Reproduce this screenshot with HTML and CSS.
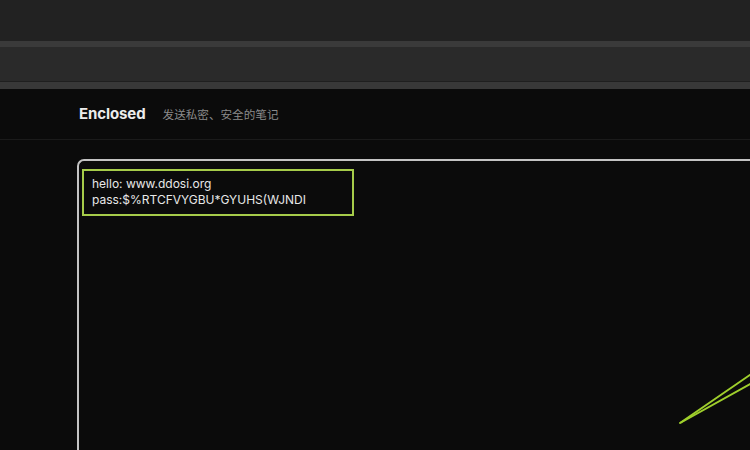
FILE: index.html
```html
<!DOCTYPE html>
<html lang="zh">
<head>
<meta charset="utf-8">
<title>Enclosed</title>
<link rel="stylesheet" href="styles.css">
</head>
<body>
<div class="chrome">
  <div class="band-top"></div>
  <div class="strip"></div>
  <div class="band-mid"></div>
  <div class="strip strip-low"></div>
</div>
<header class="header">
  <span class="brand">Enclosed</span>
  <span class="tagline">发送私密、安全的笔记</span>
</header>
<main class="main">
  <div class="editor">
    <div class="note">
      <div>hello: www.ddosi.org</div>
      <div>pass:$%RTCFVYGBU*GYUHS(WJNDI</div>
    </div>
  </div>
  <svg class="strokes" width="80" height="60" viewBox="0 0 80 60">
    <line x1="10" y1="53" x2="82" y2="3.5" stroke="#9fcf2c" stroke-width="2" stroke-linecap="round"/>
    <line x1="11" y1="52.5" x2="82" y2="13" stroke="#9fcf2c" stroke-width="2" stroke-linecap="round"/>
  </svg>
</main>
</body>
</html>
```
FILE: styles.css
```css
html, body {
  margin: 0;
  padding: 0;
  height: 100%;
  overflow: hidden;
  background: #0b0b0b;
  font-family: Inter, "Liberation Sans", "Noto Sans CJK SC", sans-serif;
}
.chrome {
  display: flex;
  flex-direction: column;
}
.band-top { height: 41px; background: #222222; }
.strip { height: 6px; background: #3a3a3a; }
.band-mid { height: 34px; background: #2a2a2a; border-bottom: 1px solid #1f1f1f; }
.strip-low { height: 7px; background: #383838; }
.header {
  height: 50px;
  border-bottom: 1px solid #1b1b1b;
  display: flex;
  align-items: center;
  padding-left: 79px;
  gap: 17px;
}
.brand {
  color: #ececec;
  font-weight: 700;
  font-size: 15px;
  letter-spacing: -0.1px;
  position: relative;
  top: -1px;
}
.tagline {
  color: #8a8a8a;
  font-size: 11.6px;
  font-family: "Noto Sans CJK SC", sans-serif;
}
.main {
  position: relative;
  box-sizing: border-box;
  padding: 19px 0 0 77px;
  height: 310px;
}
.editor {
  box-sizing: border-box;
  border: 2px solid #c4c4c4;
  border-right: none;
  border-bottom: none;
  border-radius: 7px 0 0 0;
  height: 100%;
  padding: 8px 0 0 3px;
}
.note {
  box-sizing: border-box;
  width: 272px;
  height: 47px;
  border: 2px solid #a6cc4a;
  padding: 5px 0 0 8px;
  color: #e8e8e8;
  font-size: 12px;
  line-height: 16px;
}
.strokes {
  position: absolute;
  left: 670px;
  top: 230px;
  overflow: visible;
}
```
